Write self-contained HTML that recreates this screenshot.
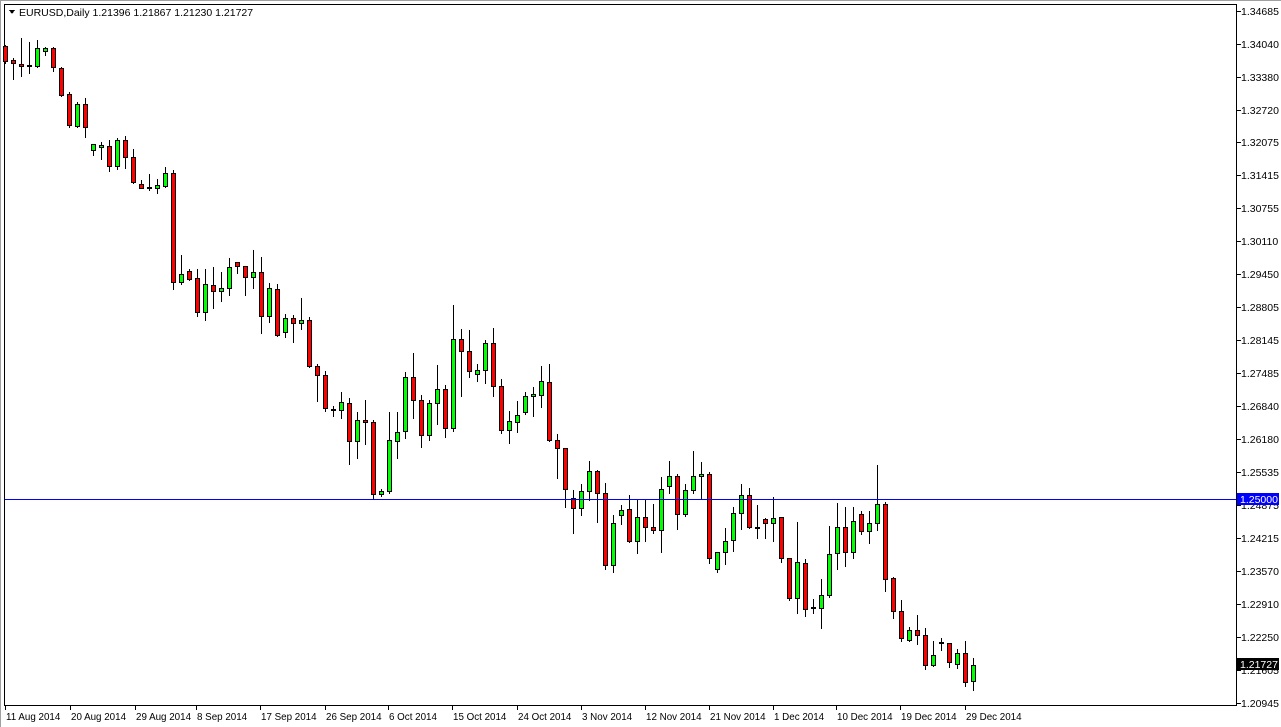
<!DOCTYPE html>
<html><head><meta charset="utf-8"><style>
html,body{margin:0;padding:0;background:#fff;width:1281px;height:727px;overflow:hidden}
svg{display:block}
text{font-family:"Liberation Sans",sans-serif;font-size:10.5px;fill:#000}
text.d{font-size:9.8px}
</style></head><body>
<svg id="s" width="1281" height="727" viewBox="0 0 1281 727" xmlns="http://www.w3.org/2000/svg" shape-rendering="crispEdges">
<rect x="0" y="0" width="1281" height="727" fill="#fff"/>
<line x1="0" y1="0.5" x2="1281" y2="0.5" stroke="#a0a0a0"/>
<line x1="0.5" y1="0" x2="0.5" y2="727" stroke="#a0a0a0"/>
<rect x="4.5" y="4.5" width="1232" height="701" fill="#fff" stroke="#000"/>
<path d="M9 10 L15 10 L12 14 Z" fill="#000"/>
<text x="19" y="16">EURUSD,Daily  1.21396 1.21867 1.21230 1.21727</text>
<g id="c"></g>
<rect x="5" y="499" width="1231" height="1" fill="#0000ff"/>
<g id="ax"></g>
<rect x="1237" y="493" width="42" height="12" fill="#0000ff"/>
<text x="1240" y="503" style="fill:#fff">1.25000</text>
<rect x="1237" y="658" width="42" height="12" fill="#000"/>
<text x="1240" y="668" style="fill:#fff">1.21727</text>
</svg>
<script>
var d=[[45,63,46,61,0],[58,79,60,63,0],[38,76,64,66,0],[42,73,65,66,0],[40,67,48,66,1],[47,55,48,51,1],[47,71,48,67,0],[67,96,68,95,0],[92,127,94,125,0],[102,127,104,126,1],[98,137,104,127,0],[144,155,144,150,1],[142,159,145,147,1],[140,171,146,166,0],[138,169,140,166,1],[136,168,140,157,0],[149,183,157,182,0],[180,188,184,188,0],[174,190,187,188,1],[179,193,185,188,1],[167,187,173,186,1],[170,289,173,282,0],[255,284,274,282,1],[269,280,271,279,0],[269,316,278,312,0],[269,320,284,312,1],[267,308,285,291,0],[272,301,288,291,1],[258,295,267,288,1],[262,273,262,266,0],[266,295,266,277,0],[250,288,272,277,1],[257,333,272,316,0],[283,322,288,316,1],[284,336,289,335,0],[314,337,318,332,1],[315,342,318,323,0],[298,329,320,323,1],[317,367,320,366,0],[364,401,366,375,0],[371,411,375,408,0],[406,416,409,410,1],[392,418,402,410,1],[398,464,403,441,0],[412,458,420,441,1],[400,444,420,422,0],[420,499,422,494,0],[489,496,491,494,1],[412,493,440,491,1],[412,458,432,441,1],[372,438,377,431,1],[353,418,377,400,0],[395,447,400,435,0],[400,440,403,435,1],[365,424,389,403,1],[385,437,389,428,0],[305,431,339,428,1],[329,396,339,351,0],[330,377,351,371,0],[364,381,370,374,1],[340,383,343,370,1],[328,396,343,386,0],[379,433,386,430,0],[411,443,421,430,1],[401,432,415,422,1],[392,414,396,412,1],[387,416,394,396,1],[366,407,381,395,1],[364,441,382,440,0],[434,478,440,448,0],[448,507,448,489,0],[490,533,498,508,0],[484,515,491,508,1],[461,500,471,491,1],[470,522,471,493,0],[483,569,493,565,0],[515,572,523,565,1],[505,524,510,515,1],[495,542,509,541,0],[500,553,517,541,1],[500,541,517,527,0],[504,533,527,530,0],[477,552,489,530,1],[461,493,476,486,1],[474,529,476,514,0],[484,516,490,514,1],[451,493,476,490,1],[462,498,474,476,1],[472,563,474,558,0],[552,572,552,569,1],[528,564,541,552,1],[507,551,513,540,1],[484,529,495,513,1],[488,528,495,527,0],[505,538,527,528,1],[518,538,519,523,0],[497,541,518,523,1],[517,562,517,558,0],[558,600,558,598,0],[522,613,562,598,1],[559,616,563,609,0],[599,613,607,608,1],[579,628,595,608,1],[526,597,554,595,1],[503,569,527,553,1],[507,566,527,552,0],[507,558,521,552,1],[511,534,514,531,0],[511,543,523,531,1],[465,530,504,523,1],[502,591,504,579,0],[577,618,578,611,0],[600,641,611,638,0],[627,641,630,640,1],[615,644,630,635,0],[628,669,635,665,0],[641,666,655,665,1],[638,650,642,643,1],[643,667,643,662,0],[649,668,653,664,1],[641,686,653,682,0],[658,690,665,681,1]];
var g=document.getElementById("c"),h="";
d.forEach(function(c,i){var x=5+8*i;
h+='<line x1="'+(x+.5)+'" y1="'+c[0]+'" x2="'+(x+.5)+'" y2="'+(c[1]+1)+'" stroke="#000"/>';
var hh=Math.max(c[3]-c[2],0);
if(hh<1){h+='<line x1="'+(x-2)+'" y1="'+(c[2]+.5)+'" x2="'+(x+3)+'" y2="'+(c[2]+.5)+'" stroke="#000"/>';}
else h+='<rect x="'+(x-1.5)+'" y="'+(c[2]+.5)+'" width="4" height="'+hh+'" fill="'+(c[4]?'#00ff00':'#ff0000')+'" stroke="#000"/>';});
g.innerHTML=h;
var p=[["1.34685",11],["1.34040",44],["1.33380",77],["1.32720",110],["1.32075",142],["1.31415",175],["1.30755",208],["1.30110",241],["1.29450",274],["1.28805",307],["1.28145",340],["1.27485",373],["1.26840",406],["1.26180",439],["1.25535",472],["1.24875",505],["1.24215",538],["1.23570",571],["1.22910",604],["1.22250",637],["1.21605",670],["1.20945",703]];
var a="";p.forEach(function(q){a+='<line x1="1237" y1="'+(q[1]+.5)+'" x2="1241" y2="'+(q[1]+.5)+'" stroke="#000"/><text x="1241" y="'+(q[1]+4)+'">'+q[0]+'</text>';});
var t=[["11 Aug 2014",5],["20 Aug 2014",70],["29 Aug 2014",135],["8 Sep 2014",196],["17 Sep 2014",260],["26 Sep 2014",325],["6 Oct 2014",388],["15 Oct 2014",452],["24 Oct 2014",517],["3 Nov 2014",581],["12 Nov 2014",645],["21 Nov 2014",709],["1 Dec 2014",773],["10 Dec 2014",836],["19 Dec 2014",900],["29 Dec 2014",965]];
t.forEach(function(q){a+='<line x1="'+(q[1]+.5)+'" y1="706" x2="'+(q[1]+.5)+'" y2="710" stroke="#000"/><text class="d" x="'+(q[1]+1)+'" y="720">'+q[0]+'</text>';});
document.getElementById("ax").innerHTML=a;
</script>
</body></html>
